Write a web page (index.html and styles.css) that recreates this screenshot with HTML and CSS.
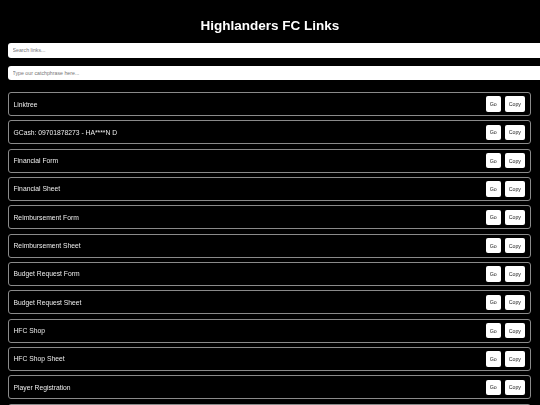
FILE: index.html
```html
<!DOCTYPE html>
<html lang="en">
<head>
<meta charset="utf-8">
<title>Highlanders FC Links</title>
<link rel="stylesheet" href="styles.css">
</head>
<body>
<main class="page">
  <h1 class="title">Highlanders FC Links</h1>
  <input class="field field-search" type="text" placeholder="Search links...">
  <input class="field field-phrase" type="text" placeholder="Type our catchphrase here...">
  <ul class="links">
    <li class="link"><span class="link-name">Linktree</span><span class="actions"><button class="btn">Go</button><button class="btn">Copy</button></span></li>
    <li class="link"><span class="link-name">GCash: 09701878273 - HA****N D</span><span class="actions"><button class="btn">Go</button><button class="btn">Copy</button></span></li>
    <li class="link"><span class="link-name">Financial Form</span><span class="actions"><button class="btn">Go</button><button class="btn">Copy</button></span></li>
    <li class="link"><span class="link-name">Financial Sheet</span><span class="actions"><button class="btn">Go</button><button class="btn">Copy</button></span></li>
    <li class="link"><span class="link-name">Reimbursement Form</span><span class="actions"><button class="btn">Go</button><button class="btn">Copy</button></span></li>
    <li class="link"><span class="link-name">Reimbursement Sheet</span><span class="actions"><button class="btn">Go</button><button class="btn">Copy</button></span></li>
    <li class="link"><span class="link-name">Budget Request Form</span><span class="actions"><button class="btn">Go</button><button class="btn">Copy</button></span></li>
    <li class="link"><span class="link-name">Budget Request Sheet</span><span class="actions"><button class="btn">Go</button><button class="btn">Copy</button></span></li>
    <li class="link"><span class="link-name">HFC Shop</span><span class="actions"><button class="btn">Go</button><button class="btn">Copy</button></span></li>
    <li class="link"><span class="link-name">HFC Shop Sheet</span><span class="actions"><button class="btn">Go</button><button class="btn">Copy</button></span></li>
    <li class="link"><span class="link-name">Player Registration</span><span class="actions"><button class="btn">Go</button><button class="btn">Copy</button></span></li>
    <li class="link"><span class="link-name">Player Registration Sheet</span><span class="actions"><button class="btn">Go</button><button class="btn">Copy</button></span></li>
  </ul>
</main>
</body>
</html>
```

FILE: styles.css
```css
html, body {
  margin: 0;
  padding: 0;
  background: #000;
  overflow: hidden;
}

body {
  font-family: "Liberation Sans", Arial, sans-serif;
  color: #fff;
}

.page {
  display: flex;
  flex-direction: column;
  padding: 17.5px 9px 0 8px;
}

.title {
  margin: 0 -9px 9.5px -8px;
  font-size: 13.5px;
  line-height: 16px;
  font-weight: bold;
  text-align: center;
  will-change: transform;
}

.field {
  display: block;
  box-sizing: border-box;
  width: calc(100% + 12px);
  height: 14.5px;
  margin: 0;
  padding: 0 4.5px;
  border: none;
  border-radius: 3px;
  background: #fff;
  font-family: "Liberation Sans", Arial, sans-serif;
  font-size: 5.25px;
  color: #222;
  outline: none;
}

.field::placeholder {
  color: #777;
}

.field-search {
  margin-bottom: 8px;
}

.field-phrase {
  margin-bottom: 12px;
}

.links {
  list-style: none;
  margin: 0;
  padding: 0;
  display: flex;
  flex-direction: column;
  gap: 4.33px;
  will-change: transform;
}

.link {
  box-sizing: border-box;
  height: 24px;
  display: flex;
  align-items: center;
  justify-content: space-between;
  padding: 0 5px 0 4.5px;
  border: 1px solid #8a8a8a;
  border-radius: 3px;
}

.link-name {
  font-size: 6.75px;
  color: #ececec;
}

.actions {
  display: flex;
  gap: 4px;
}

.btn {
  box-sizing: border-box;
  height: 15.5px;
  padding: 0 4px;
  border: none;
  border-radius: 2px;
  background: #fff;
  color: #222;
  font-family: "Liberation Sans", Arial, sans-serif;
  font-size: 5.25px;
  cursor: pointer;
}
```
